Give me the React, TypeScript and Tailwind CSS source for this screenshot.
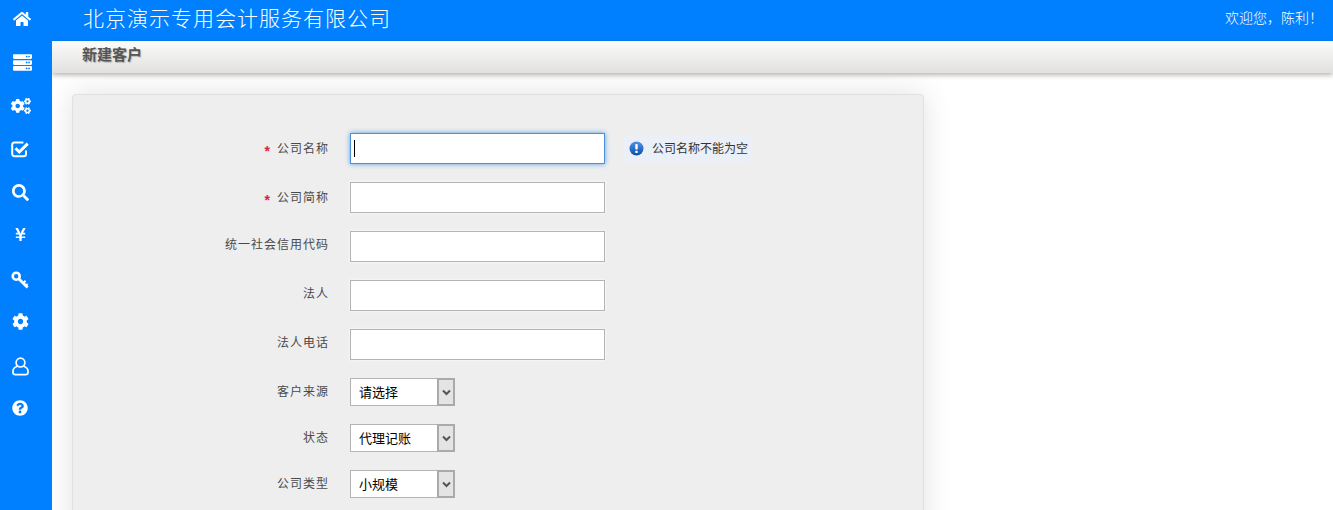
import React from "react";
import { FaHome, FaServer, FaCogs, FaSearch, FaYenSign, FaCog, FaQuestionCircle } from "react-icons/fa";

const cjk = { fontFamily: '"Liberation Sans","Noto Sans CJK SC",sans-serif' };

function CheckIcon() {
  return (
    <svg width="19" height="18" viewBox="0 0 19 18" fill="none" stroke="currentColor">
      <path d="M15 10.5V14a2.2 2.2 0 0 1-2.2 2.2H3.4A2.2 2.2 0 0 1 1.2 14V4.6a2.2 2.2 0 0 1 2.2-2.2h9" strokeWidth="2" />
      <path d="M4.5 8.2l3.8 3.8 8.4-8.4" strokeWidth="3" />
    </svg>
  );
}

function KeyIcon() {
  return (
    <svg width="18" height="18" viewBox="0 0 18 18" fill="none" stroke="currentColor">
      <circle cx="5.2" cy="5.2" r="3.5" strokeWidth="2.6" />
      <path d="M8 8l8.6 8.6" strokeWidth="2.8" />
      <path d="M12.2 12l2.4-2.2M14.8 14.6l1.8-1.7" strokeWidth="2" />
    </svg>
  );
}

function UserIcon() {
  return (
    <svg width="17" height="19" viewBox="0 0 17 19" fill="none" stroke="currentColor" strokeWidth="1.7">
      <circle cx="8.5" cy="5.6" r="4.4" />
      <path d="M5.4 9.2C2.6 10 1 11.6 1 14.2v1.3c0 1.4 1 2.2 2.4 2.2h10.2c1.4 0 2.4-.8 2.4-2.2v-1.3c0-2.6-1.6-4.2-4.4-5" />
    </svg>
  );
}

const icons: { node: React.ReactNode; cls: string }[] = [
  { node: <FaHome size={18} />, cls: "ml-[4px]" },
  { node: <FaServer size={19} />, cls: "ml-[4px]" },
  { node: <FaCogs size={20} />, cls: "ml-[1px]" },
  { node: <CheckIcon />, cls: "ml-[1px]" },
  { node: <FaSearch size={17} />, cls: "ml-[0px]" },
  { node: <FaYenSign size={15} />, cls: "-mt-[4px]" },
  { node: <KeyIcon />, cls: "ml-[0px]" },
  { node: <FaCog size={17} />, cls: "-mt-[4px]" },
  { node: <UserIcon />, cls: "ml-[0px]" },
  { node: <FaQuestionCircle size={16} />, cls: "-mt-[4px]" },
];

function Label({ children, req, up }: { children: React.ReactNode; req?: boolean; up?: boolean }) {
  return (
    <div
      className={
        "w-[256px] flex justify-end items-center text-[12px] tracking-[1px] text-[#4a4a4a] " +
        (up ? "pb-[4px]" : "")
      }
    >
      {req && <span className="text-[#e0203c] mr-[6px] text-[14px] font-bold leading-none mt-[5px]">*</span>}
      <span>{children}</span>
    </div>
  );
}

function TextRow({ label, req, focus, tip }: { label: string; req?: boolean; focus?: boolean; tip?: string }) {
  return (
    <div className="flex items-center h-[31px] mb-[18px]">
      <Label req={req} up={!req}>
        {label}
      </Label>
      <div
        className={
          "ml-[21px] w-[255px] h-[31px] bg-white border flex items-center pl-[3px] " +
          (focus
            ? "border-[#4a90d9] shadow-[0_0_5px_#5a9fe6]"
            : "border-[#b4b4b4] shadow-[0_0_3px_rgba(255,255,255,0.9)]")
        }
      >
        {focus && <div className="w-[1px] h-[17px] bg-black" />}
      </div>
      {tip && (
        <div className="ml-[18px] flex items-center text-[12px] text-[#333] h-[27px] pl-[6px] pr-[3px] bg-[#ebeff7]">
          <svg width="15" height="15" viewBox="0 0 15 15" className="mr-[8px]">
            <defs>
              <linearGradient id="tipGrad" x1="0" y1="0" x2="0" y2="1">
                <stop offset="0" stopColor="#4f93e8" />
                <stop offset="1" stopColor="#0a4fa8" />
              </linearGradient>
            </defs>
            <circle cx="7.5" cy="7.5" r="7" fill="url(#tipGrad)" />
            <rect x="6.3" y="3" width="2.4" height="5.6" rx="0.8" fill="#fff" />
            <rect x="6.3" y="9.8" width="2.4" height="2.2" rx="0.6" fill="#fff" />
          </svg>
          {tip}
        </div>
      )}
    </div>
  );
}

function SelectRow({ label, value }: { label: string; value: string }) {
  return (
    <div className="flex items-center h-[28px] mb-[18px]">
      <Label>{label}</Label>
      <div className="ml-[21px] w-[105px] h-[28px] bg-white border border-[#b4b4b4] flex items-stretch">
        <div className="flex-1 pl-[8px] pt-[1px] flex items-center text-[13px] text-black">{value}</div>
        <div className="w-[18px] -my-[1px] -mr-[1px] border-2 border-[#aaaaaa] bg-[#e4e4e4] flex items-center justify-center text-[#555]">
          <svg width="9" height="7" viewBox="0 0 9 7" fill="none" stroke="currentColor" strokeWidth="2">
            <path d="M1 1.5l3.5 3.5 3.5-3.5" />
          </svg>
        </div>
      </div>
    </div>
  );
}

export default function App() {
  return (
    <div className="w-[1333px] h-[510px] overflow-hidden flex bg-white" style={cjk}>
      <aside className="w-[52px] h-full bg-[#0080ff] shrink-0 pl-[2px] text-white relative z-20">
        <div className="flex flex-col -mt-[3px]">
          {icons.map(({ node, cls }, i) => (
            <div key={i} className="h-[43.5px] w-[36px] shrink-0 flex items-center justify-center">
              <div className={cls}>{node}</div>
            </div>
          ))}
        </div>
      </aside>
      <div className="flex-1 flex flex-col min-w-0">
        <header className="h-[41px] bg-[#0080ff] shrink-0 flex items-center justify-between pl-[31px] pr-[10px] text-white">
          <div className="text-[21px] tracking-[1px] font-light leading-none pb-[4px]">北京演示专用会计服务有限公司</div>
          <div className="text-[14px] font-light pb-[4px]">欢迎您，陈利！</div>
        </header>
        <div className="h-[32px] shrink-0 bg-gradient-to-b from-[#fbfbfb] to-[#e2e1e0] shadow-[0_2px_5px_rgba(0,0,0,0.3)] pl-[30px] flex items-center text-[15px] font-bold text-[#555] pb-[3px] relative z-10 [text-shadow:1px_1px_1px_rgba(0,0,0,0.25)]">
          新建客户
        </div>
        <main className="flex-1 pl-[20px] pt-[21px] overflow-hidden">
          <section className="w-[852px] h-[500px] bg-[#eeeeee] border border-[#e0e0e0] rounded-[4px] shadow-[0_0_30px_rgba(0,0,0,0.12)] pt-[38px]">
            <TextRow label="公司名称" req focus tip="公司名称不能为空" />
            <TextRow label="公司简称" req />
            <TextRow label="统一社会信用代码" />
            <TextRow label="法人" />
            <TextRow label="法人电话" />
            <SelectRow label="客户来源" value="请选择" />
            <SelectRow label="状态" value="代理记账" />
            <SelectRow label="公司类型" value="小规模" />
          </section>
        </main>
      </div>
    </div>
  );
}
